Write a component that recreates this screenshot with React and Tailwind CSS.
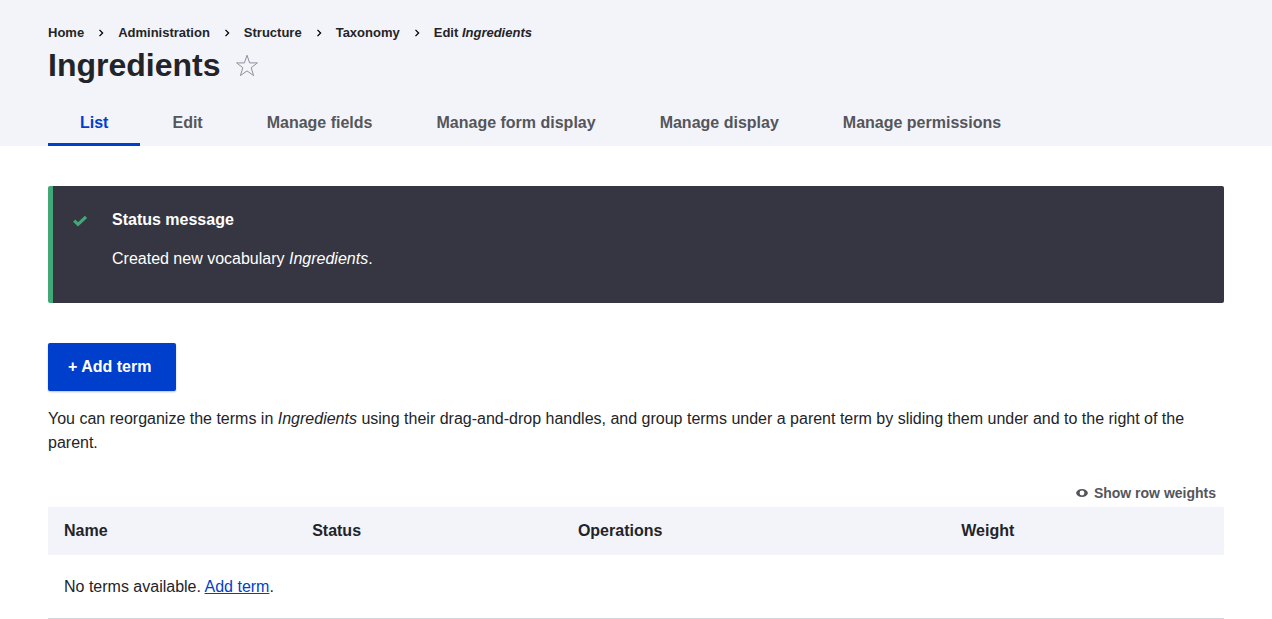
import React from "react";

const trail = ["Home", "Administration", "Structure", "Taxonomy"];
const tabs = ["List", "Edit", "Manage fields", "Manage form display", "Manage display", "Manage permissions"];

function Chevron() {
  return (
    <svg className="w-2 h-2" viewBox="0 0 8 8" fill="none" stroke="#000" strokeWidth="1.3" aria-hidden="true">
      <path d="M2.500 0.900 5.600 4 2.500 7.100" />
    </svg>
  );
}

function Header() {
  return (
    <header className="bg-[#f3f4f9] px-12 pt-6">
      <nav aria-label="Breadcrumb">
        <ol className="flex items-center text-[13px] leading-[18px] font-bold">
          {trail.map((item) => (
            <li key={item} className="flex items-center">
              <a href="#">{item}</a>
              <span className="px-[13px]">
                <Chevron />
              </span>
            </li>
          ))}
          <li>
            <a href="#">
              Edit <em>Ingredients</em>
            </a>
          </li>
        </ol>
      </nav>
      <div className="mt-0.5 flex items-center gap-3.5">
        <h1 className="text-[32px] leading-[42px] font-bold">Ingredients</h1>
        <button type="button" aria-label="Add to shortcuts">
          <svg className="w-6 h-6" viewBox="0 0 24 24" fill="none" stroke="#8e929c" strokeWidth="1" aria-hidden="true">
            <path d="M13 2.200 15.600 9.900H23.400L17.200 14.700 19.600 22.600 13 17.900 6.400 22.600 8.800 14.700 2.600 9.900H10.400Z" />
          </svg>
        </button>
      </div>
      <nav aria-label="Primary tabs" className="mt-3">
        <ul className="flex font-bold text-[#55565b]">
          {tabs.map((tab, i) => (
            <li key={tab}>
              <a
                href="#"
                aria-current={i === 0 ? "page" : undefined}
                className={
                  i === 0
                    ? "flex h-12 items-center border-b-3 border-[#003ecc] px-8 pt-[5px] text-[#003ecc]"
                    : "flex h-12 items-center px-8 pt-0.5"
                }
              >
                {tab}
              </a>
            </li>
          ))}
        </ul>
      </nav>
    </header>
  );
}

function StatusMessage() {
  return (
    <section
      role="status"
      className="flex gap-6 rounded-xs border-l-5 border-[#42a877] bg-[#353641] pt-[22px] pr-6 pb-8 pl-[19px] text-white"
    >
      <svg className="mt-[5px] h-4 w-4" viewBox="0 0 16 16" fill="none" stroke="#42a877" strokeWidth="3.2" aria-hidden="true">
        <path d="M2.200 7.600 6 11.300 14 3.800" />
      </svg>
      <div>
        <h2 className="font-bold leading-6">Status message</h2>
        <p className="mt-[15px] leading-6">
          Created new vocabulary <em>Ingredients</em>.
        </p>
      </div>
    </section>
  );
}

function TermsTable() {
  return (
    <table className="w-full table-fixed border-separate border-spacing-0 text-left">
      <thead className="bg-[#f3f4f9]">
        <tr className="h-12">
          <th className="w-[21.1%] px-4 font-bold">Name</th>
          <th className="w-[22.6%] px-4 font-bold">Status</th>
          <th className="w-[32.6%] px-4 font-bold">Operations</th>
          <th className="px-4 font-bold">Weight</th>
        </tr>
      </thead>
      <tbody>
        <tr className="h-16">
          <td colSpan={4} className="border-b border-[#d3d4d9] px-4">
            No terms available.{" "}
            <a href="#" className="text-[#003ecc] underline">
              Add term
            </a>
            .
          </td>
        </tr>
      </tbody>
    </table>
  );
}

export default function App() {
  return (
    <div className="bg-white font-['Liberation_Sans',Arial,sans-serif] text-base text-[#232429]">
      <Header />
      <main className="px-12 pt-10">
        <StatusMessage />
        <a
          href="#"
          className="mt-10 inline-flex h-12 items-center rounded-xs bg-[#003ecc] pr-[25px] pl-5 font-bold text-white shadow-[0_1px_2px_rgba(0,0,0,0.25)]"
        >
          + Add term
        </a>
        <p className="mt-4 leading-6">
          You can reorganize the terms in <em>Ingredients</em> using their drag-and-drop handles, and group terms under a
          parent term by sliding them under and to the right of the parent.
        </p>
        <div className="mt-6 flex justify-end pr-2">
          <button type="button" className="flex h-7 items-center gap-1.5 text-sm font-bold text-[#55565b]">
            <svg className="h-3 w-3" viewBox="0 0 12 12" aria-hidden="true">
              <path
                fill="#55565b"
                fillRule="evenodd"
                d="M6 2C3 2 .8 3.600 0 6c.8 2.400 3 4 6 4s5.200-1.600 6-4C11.200 3.600 9 2 6 2Zm0 1.600a2.400 2.400 0 1 1 0 4.800 2.400 2.400 0 0 1 0-4.800Z"
              />
            </svg>
            Show row weights
          </button>
        </div>
        <TermsTable />
      </main>
    </div>
  );
}
